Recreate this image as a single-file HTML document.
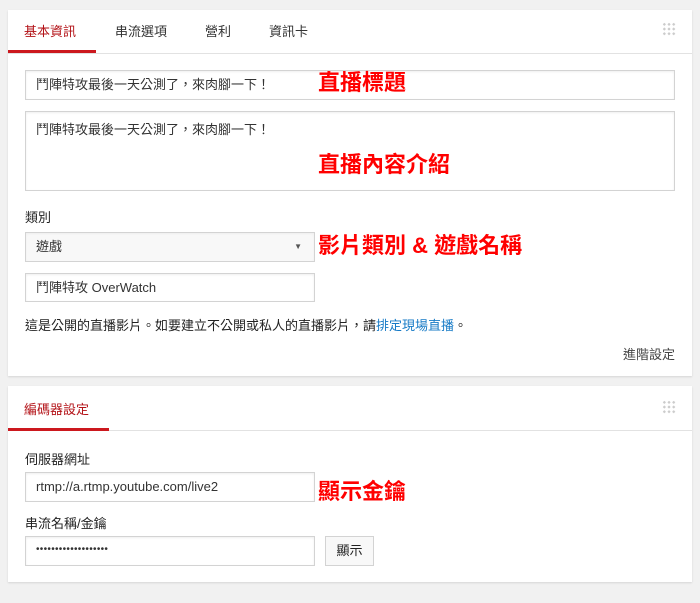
<!DOCTYPE html>
<html><head><meta charset="utf-8"><style>
*{box-sizing:border-box;margin:0;padding:0}
body{width:700px;height:603px;background:#f1f1f1;font-family:"Liberation Sans","Noto Sans CJK TC",sans-serif;font-size:13px;color:#222;position:relative;overflow:hidden}
.card{position:absolute;left:8px;width:684px;background:#fff;box-shadow:0 1px 2px rgba(0,0,0,.12)}
.abs{position:absolute}
.hdr{position:absolute;left:0;right:0;top:0;border-bottom:1px solid #e2e2e2}
.tab{position:absolute;top:11px;font-size:13px;color:#333}
.act{color:#b31217}
.ul{position:absolute;height:3px;background:#cc181e}
.inp{position:absolute;border:1px solid #d3d3d3;background:#fff;padding-left:10px;font-size:13px;color:#333;box-shadow:inset 0 1px 2px #eee}
.red{position:absolute;color:#ff0000;font-size:22px;font-weight:bold;white-space:nowrap;line-height:26px}
.grip{position:absolute;width:14px;height:14px;background-image:radial-gradient(circle,#ccc 1.2px,transparent 1.3px);background-size:4.7px 4.7px}
</style></head><body>
<div class="card" style="top:10px;height:366px">
 <div class="hdr" style="height:44px"></div>
 <div class="tab act" style="left:16px">基本資訊</div>
 <div class="tab" style="left:107px">串流選項</div>
 <div class="tab" style="left:197px">營利</div>
 <div class="tab" style="left:261px">資訊卡</div>
 <div class="ul" style="left:0;top:40px;width:88px"></div>
 <div class="grip" style="left:654px;top:12px"></div>
 <div class="inp" style="left:17px;top:60px;width:650px;height:30px;line-height:28px">鬥陣特攻最後一天公測了，來肉腳一下！</div>
 <div class="inp" style="left:17px;top:101px;width:650px;height:80px;padding-top:7px">鬥陣特攻最後一天公測了，來肉腳一下！</div>
 <div class="abs" style="left:17px;top:197px">類別</div>
 <div class="inp" style="left:17px;top:222px;width:290px;height:30px;line-height:28px;background:#f8f8f8">遊戲<span style="position:absolute;right:12px;font-size:8px;color:#555">▼</span></div>
 <div class="inp" style="left:17px;top:263px;width:290px;height:29px;line-height:27px">鬥陣特攻 OverWatch</div>
 <div class="abs" style="left:17px;top:305px">這是公開的直播影片。如要建立不公開或私人的直播影片，請<span style="color:#167ac6">排定現場直播</span>。</div>
 <div class="abs" style="right:17px;top:334px;color:#444">進階設定</div>
</div>
<div class="card" style="top:386px;height:196px">
 <div class="hdr" style="height:45px"></div>
 <div class="tab act" style="left:16px;top:13px">編碼器設定</div>
 <div class="ul" style="left:0;top:42px;width:101px"></div>
 <div class="grip" style="left:654px;top:14px"></div>
 <div class="abs" style="left:17px;top:63px">伺服器網址</div>
 <div class="inp" style="left:17px;top:86px;width:290px;height:30px;line-height:28px">rtmp://a.rtmp.youtube.com/live2</div>
 <div class="abs" style="left:17px;top:127px">串流名稱/金鑰</div>
 <div class="inp" style="left:17px;top:150px;width:290px;height:30px;line-height:26px;font-size:10px;letter-spacing:0.3px">•••••••••••••••••••</div>
 <div class="abs" style="left:317px;top:150px;width:49px;height:30px;border:1px solid #d3d3d3;background:#f8f8f8;text-align:center;line-height:28px">顯示</div>
</div>
<div class="red" style="left:318px;top:70px">直播標題</div>
<div class="red" style="left:318px;top:152px">直播內容介紹</div>
<div class="red" style="left:318px;top:233px">影片類別 &amp; 遊戲名稱</div>
<div class="red" style="left:318px;top:479px">顯示金鑰</div>
</body></html>
